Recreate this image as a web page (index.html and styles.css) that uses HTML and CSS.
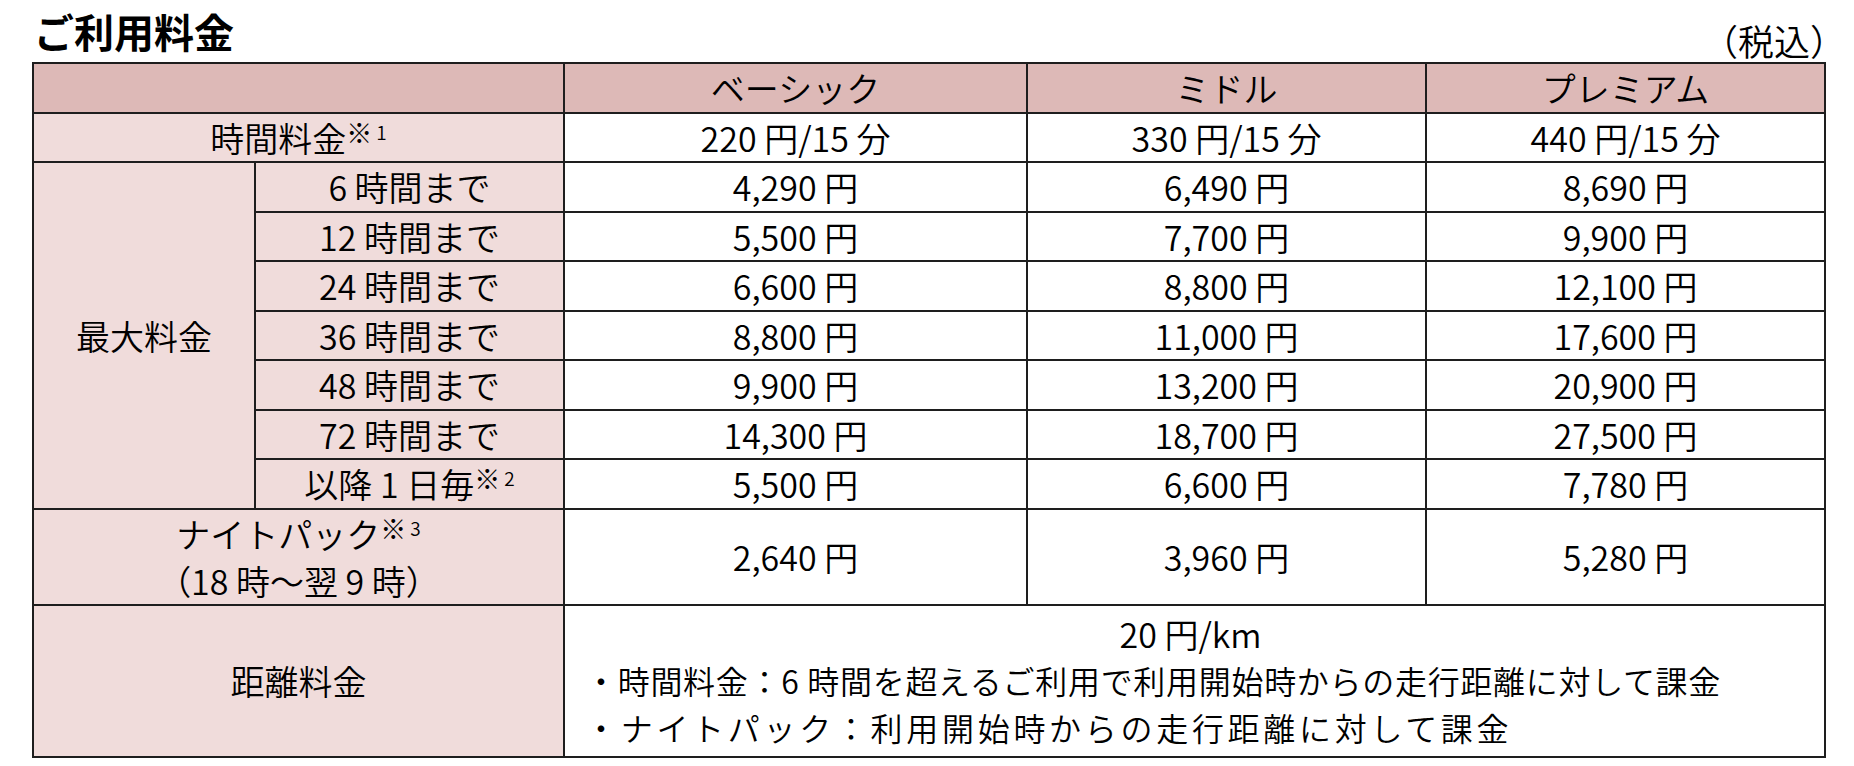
FILE: index.html
```html
<!DOCTYPE html>
<html lang="ja">
<head>
<meta charset="utf-8">
<title>ご利用料金</title>
<link rel="stylesheet" href="styles.css">
</head>
<body>
<div class="page">
  <div class="title-row">
    <h1 class="title">ご利用料金</h1>
    <span class="tax">（税込）</span>
  </div>
  <table class="fees">
    <colgroup>
      <col class="c-label">
      <col class="c-sub">
      <col class="c-basic">
      <col class="c-middle">
      <col class="c-premium">
    </colgroup>
    <thead>
      <tr class="row">
        <th colspan="2" class="head"></th>
        <th class="head">ベーシック</th>
        <th class="head">ミドル</th>
        <th class="head">プレミアム</th>
      </tr>
    </thead>
    <tbody>
      <tr class="row">
        <th colspan="2" class="label">時間料金<span class="note">※<span class="num">1</span></span></th>
        <td>220 円/15 分</td><td>330 円/15 分</td><td>440 円/15 分</td>
      </tr>
      <tr class="row">
        <th rowspan="7" class="label">最大料金</th>
        <th class="label">6 時間まで</th>
        <td>4,290 円</td><td>6,490 円</td><td>8,690 円</td>
      </tr>
      <tr class="row">
        <th class="label">12 時間まで</th>
        <td>5,500 円</td><td>7,700 円</td><td>9,900 円</td>
      </tr>
      <tr class="row">
        <th class="label">24 時間まで</th>
        <td>6,600 円</td><td>8,800 円</td><td>12,100 円</td>
      </tr>
      <tr class="row">
        <th class="label">36 時間まで</th>
        <td>8,800 円</td><td>11,000 円</td><td>17,600 円</td>
      </tr>
      <tr class="row">
        <th class="label">48 時間まで</th>
        <td>9,900 円</td><td>13,200 円</td><td>20,900 円</td>
      </tr>
      <tr class="row">
        <th class="label">72 時間まで</th>
        <td>14,300 円</td><td>18,700 円</td><td>27,500 円</td>
      </tr>
      <tr class="row">
        <th class="label">以降 1 日毎<span class="note">※<span class="num">2</span></span></th>
        <td>5,500 円</td><td>6,600 円</td><td>7,780 円</td>
      </tr>
      <tr class="night">
        <th colspan="2" class="label">ナイトパック<span class="note">※<span class="num">3</span></span><br>（18 時～翌 9 時）</th>
        <td>2,640 円</td><td>3,960 円</td><td>5,280 円</td>
      </tr>
      <tr class="distance">
        <th colspan="2" class="label">距離料金</th>
        <td colspan="3" class="detail">
          <div class="km">20 円/km</div>
          <div class="line tight">・時間料金：6 時間を超えるご利用で利用開始時からの走行距離に対して課金</div>
          <div class="line spaced">・ナイトパック：利用開始時からの走行距離に対して課金</div>
        </td>
      </tr>
    </tbody>
  </table>
</div>
</body>
</html>
```

FILE: styles.css
```css
html, body {
  margin: 0;
  padding: 0;
  background: #ffffff;
}

body {
  font-family: "Noto Sans CJK JP", "Noto Sans", sans-serif;
  color: #000000;
}

.page {
  width: 1792px;
  padding-left: 32px;
}

.title-row {
  display: flex;
  justify-content: space-between;
  align-items: flex-end;
  height: 62px;
}

.title {
  margin: 0 0 6px 2px;
  font-size: 40px;
  font-weight: 700;
  line-height: 50px;
}

.tax {
  font-size: 36px;
  font-weight: 350;
  line-height: 42px;
  margin: 0 -22px 1px 0;
}

.fees {
  border-collapse: collapse;
  table-layout: fixed;
  width: 1792px;
  font-size: 34px;
  font-weight: 350;
}

.c-label { width: 222px; }
.c-sub { width: 309px; }
.c-basic { width: 463px; }
.c-middle { width: 399px; }
.c-premium { width: 399px; }

.fees th,
.fees td {
  border: 2px solid #1e1e1e;
  padding: 0;
  text-align: center;
  vertical-align: middle;
  font-weight: 350;
  line-height: 47px;
  white-space: nowrap;
}

.row { height: 49.5px; }
.night { height: 96px; }
.distance { height: 152px; }

.fees .head { background: #ddb9b7; }
.fees .label { background: #f0dcdb; }

.note {
  font-size: 26px;
  line-height: 1;
  vertical-align: 9px;
}

.note .num {
  font-size: 19px;
  padding-left: 4px;
  vertical-align: 3px;
}

.fees .detail {
  text-align: left;
  padding: 0 24px 0 20px;
  font-size: 32px;
}

.km {
  text-align: center;
  font-size: 34px;
  margin-left: -4px;
}

.tight {
  letter-spacing: 0.7px;
}

.spaced {
  letter-spacing: 3.7px;
}
```
